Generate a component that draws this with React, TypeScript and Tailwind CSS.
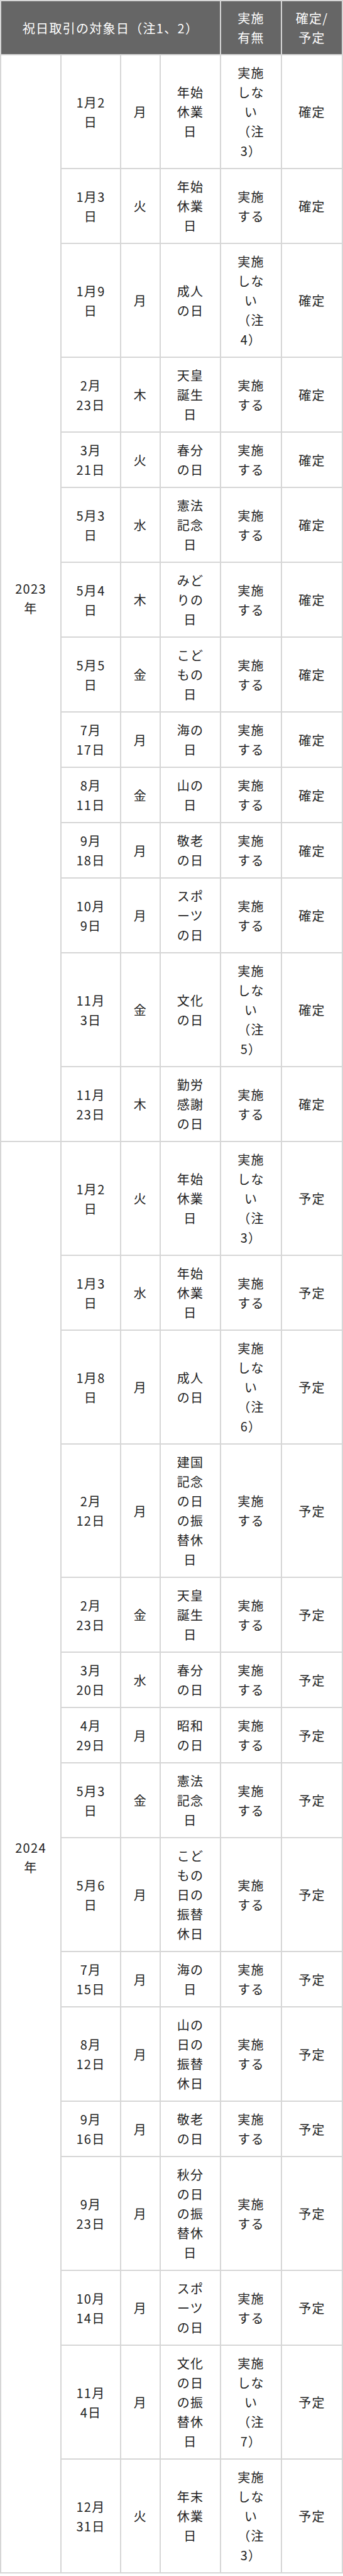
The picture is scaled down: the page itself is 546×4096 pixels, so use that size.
import React from "react";

type Row = [string, string, string, string];

const NOT3 = "実施|しな|い|（注|3）";
const DO = "実施|する";

const rows2023: Row[] = [
  ["1月2|日", "月", "年始|休業|日", NOT3],
  ["1月3|日", "火", "年始|休業|日", DO],
  ["1月9|日", "月", "成人|の日", "実施|しな|い|（注|4）"],
  ["2月|23日", "木", "天皇|誕生|日", DO],
  ["3月|21日", "火", "春分|の日", DO],
  ["5月3|日", "水", "憲法|記念|日", DO],
  ["5月4|日", "木", "みど|りの|日", DO],
  ["5月5|日", "金", "こど|もの|日", DO],
  ["7月|17日", "月", "海の|日", DO],
  ["8月|11日", "金", "山の|日", DO],
  ["9月|18日", "月", "敬老|の日", DO],
  ["10月|9日", "月", "スポ|ーツ|の日", DO],
  ["11月|3日", "金", "文化|の日", "実施|しな|い|（注|5）"],
  ["11月|23日", "木", "勤労|感謝|の日", DO],
];

const rows2024: Row[] = [
  ["1月2|日", "火", "年始|休業|日", NOT3],
  ["1月3|日", "水", "年始|休業|日", DO],
  ["1月8|日", "月", "成人|の日", "実施|しな|い|（注|6）"],
  ["2月|12日", "月", "建国|記念|の日|の振|替休|日", DO],
  ["2月|23日", "金", "天皇|誕生|日", DO],
  ["3月|20日", "水", "春分|の日", DO],
  ["4月|29日", "月", "昭和|の日", DO],
  ["5月3|日", "金", "憲法|記念|日", DO],
  ["5月6|日", "月", "こど|もの|日の|振替|休日", DO],
  ["7月|15日", "月", "海の|日", DO],
  ["8月|12日", "月", "山の|日の|振替|休日", DO],
  ["9月|16日", "月", "敬老|の日", DO],
  ["9月|23日", "月", "秋分|の日|の振|替休|日", DO],
  ["10月|14日", "月", "スポ|ーツ|の日", DO],
  ["11月|4日", "月", "文化|の日|の振|替休|日", "実施|しな|い|（注|7）"],
  ["12月|31日", "火", "年末|休業|日", NOT3],
];

function Lines({ text }: { text: string }) {
  const parts = text.split("|");
  return (
    <>
      {parts.map((p, i) => (
        <React.Fragment key={i}>
          {p}
          {i < parts.length - 1 ? <br /> : null}
        </React.Fragment>
      ))}
    </>
  );
}

const td =
  "border-r-2 border-b-2 border-[#d6d6d6] py-3 px-0 text-center align-middle whitespace-nowrap";
const th =
  "border-r-2 border-b-2 border-[#d6d6d6] py-[11px] px-0 text-center align-middle whitespace-nowrap font-normal text-white bg-[#666666]";

function YearBlock({ year, rows, status }: { year: string; rows: Row[]; status: string }) {
  return (
    <>
      {rows.map((r, i) => (
        <tr key={i}>
          {i === 0 ? (
            <td rowSpan={rows.length} className={td}>
              {year}
              <br />年
            </td>
          ) : null}
          <td className={td}>
            <Lines text={r[0]} />
          </td>
          <td className={td}>{r[1]}</td>
          <td className={td}>
            <Lines text={r[2]} />
          </td>
          <td className={td}>
            <Lines text={r[3]} />
          </td>
          <td className={td}>{status}</td>
        </tr>
      ))}
    </>
  );
}

export default function App() {
  return (
    <div className="w-[546px] bg-white">
      <table
        className="w-[546px] table-fixed border-separate border-spacing-0 border-t-2 border-l-2 border-[#d6d6d6] text-[20px] leading-[31px] tracking-[1.3px] text-[#222222] [text-spacing-trim:space-all]"
        style={{ fontFamily: '"Noto Sans CJK JP", "Noto Sans", sans-serif' }}
      >
        <colgroup>
          <col className="w-[96px]" />
          <col className="w-[95px]" />
          <col className="w-[63px]" />
          <col className="w-[96px]" />
          <col className="w-[97px]" />
          <col className="w-[97px]" />
        </colgroup>
        <thead>
          <tr>
            <th colSpan={4} className={th}>
              祝日取引の対象日（注1、2）
            </th>
            <th className={th}>
              実施
              <br />
              有無
            </th>
            <th className={th}>
              確定/
              <br />
              予定
            </th>
          </tr>
        </thead>
        <tbody>
          <YearBlock year="2023" rows={rows2023} status="確定" />
          <YearBlock year="2024" rows={rows2024} status="予定" />
        </tbody>
      </table>
    </div>
  );
}
